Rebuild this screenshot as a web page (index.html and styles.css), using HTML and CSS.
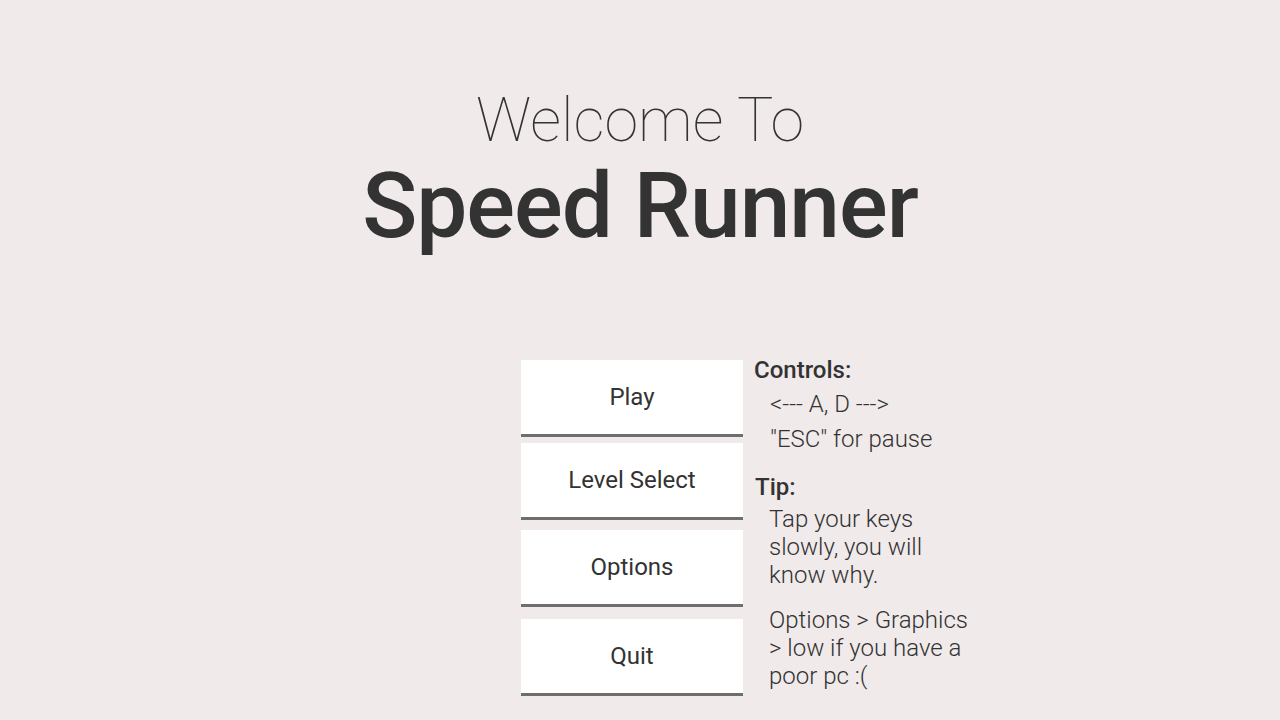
FILE: index.html
```html
<!DOCTYPE html>
<html lang="en">
<head>
<meta charset="utf-8">
<title>Speed Runner</title>
<link rel="stylesheet" href="styles.css">
</head>
<body>
<header class="title">
  <h2 class="welcome">Welcome To</h2>
  <h1 class="game">Speed Runner</h1>
</header>
<main class="menu">
  <nav class="buttons">
    <button class="btn btn-play">Play</button>
    <button class="btn btn-level">Level Select</button>
    <button class="btn btn-options">Options</button>
    <button class="btn btn-quit">Quit</button>
  </nav>
  <aside class="info">
    <h3 class="info-head">Controls:</h3>
    <p class="item item-keys">&lt;--- A, D ---&gt;</p>
    <p class="item item-esc">"ESC" for pause</p>
    <h3 class="info-head tip-head">Tip:</h3>
    <p class="item item-tip">Tap your keys slowly, you will know why.</p>
    <p class="item item-gfx">Options &gt; Graphics &gt; low if you have a poor pc :(</p>
  </aside>
</main>
</body>
</html>
```
FILE: styles.css
```css
html, body {
  margin: 0;
  padding: 0;
  background: #f0eaea;
  color: #333333;
  font-family: Roboto, "Noto Sans", sans-serif;
  width: 1280px;
  height: 720px;
  overflow: hidden;
}

.title {
  padding-top: 90px;
  text-align: center;
}

.welcome {
  margin: 0;
  font-size: 61px;
  line-height: 61px;
  font-weight: 100;
  color: #333;
}

.game {
  margin: 10px 0 0 0;
  font-size: 91px;
  line-height: 91px;
  font-weight: 500;
  letter-spacing: -1px;
  color: #333;
}

.menu {
  display: flex;
  align-items: flex-start;
  margin-top: 108px;
  padding-left: 521px;
}

.buttons {
  display: flex;
  flex-direction: column;
  width: 222px;
}

.btn {
  display: block;
  width: 222px;
  height: 77px;
  margin: 0;
  padding: 0;
  background: #ffffff;
  border: none;
  border-bottom: 3px solid #6f6d6d;
  font-family: Roboto, "Noto Sans", sans-serif;
  font-size: 24px;
  font-weight: 400;
  color: #333;
  box-sizing: border-box;
  line-height: 74px;
}

.btn-level { margin-top: 6px; }
.btn-options { margin-top: 10px; }
.btn-quit { margin-top: 12px; }

.info {
  margin-left: 11px;
  margin-top: -2px;
  width: 230px;
  font-size: 24px;
}

.info-head {
  margin: 0;
  font-size: 24px;
  line-height: 24px;
  font-weight: 500;
}

.tip-head {
  margin-top: 22px;
  margin-left: 1px;
}

.item {
  margin: 0;
  padding-left: 15px;
  font-size: 24px;
  line-height: 28px;
  font-weight: 300;
}

.item-keys { margin-top: 8px; padding-left: 16px; }
.item-esc { margin-top: 7px; padding-left: 16px; }
.item-tip { margin-top: 6px; width: 205px; }
.item-gfx { margin-top: 17px; width: 205px; }
```
